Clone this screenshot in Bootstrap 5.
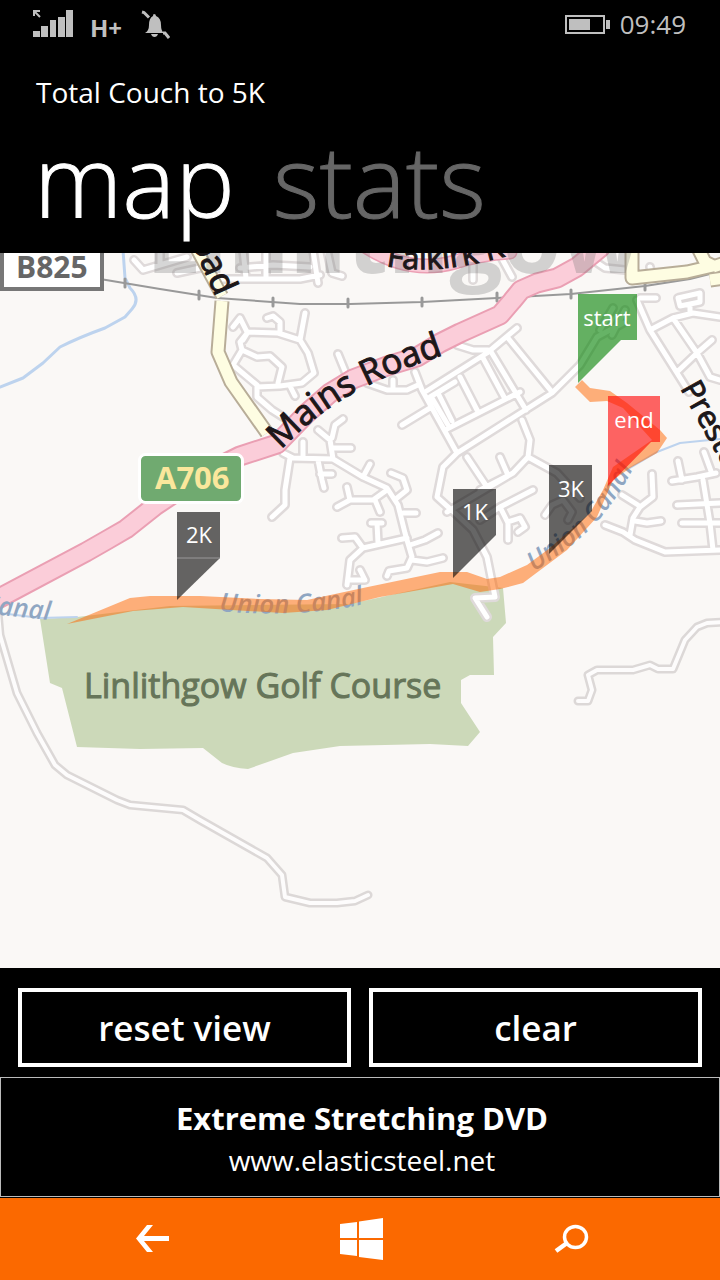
<!DOCTYPE html>
<html lang="en">
<head>
<meta charset="utf-8">
<meta name="viewport" content="width=device-width, initial-scale=1">
<title>Total Couch to 5K</title>
<link href="https://cdn.jsdelivr.net/npm/bootstrap@5.3.0/dist/css/bootstrap.min.css" rel="stylesheet">
<style>
  body { background: #000; color: #fff; font-family: "Open Sans", "Noto Sans", sans-serif; }
  .status { color: #bfbfbf; height: 48px; padding: 0 34px 0 32px; }
  .clock { font-size: 26px; line-height: 48px; }
  .net { font-size: 24px; font-weight: 700; line-height: 24px; }
  .app-title { font-size: 28px; line-height: 40px; padding: 24px 36px 0; }
  .pivot { padding: 0 34px; height: 141px; gap: 38px; }
  .pivot a { font-size: 100px; line-height: 134px; font-weight: 300; color: #666; text-decoration: none; -webkit-text-stroke: 1px; }
  .pivot a.active { color: #fff; }
  .map { background: #faf8f6; }
  .actions { padding: 20px 18px 10px; gap: 18px; }
  .btn-metro { height: 79px; border: 4px solid #fff; border-radius: 0; color: #fff; font-size: 35px; font-weight: 600; line-height: 40px; padding: 0; }
  .btn-metro:hover { background: #fff; color: #000; }
  .promo { border: 1px solid #bbb; height: 120px; margin-bottom: 1px; color: #fff; text-decoration: none; padding: 19px 0 0 4px; }
  .promo strong { font-size: 31px; line-height: 42px; }
  .promo span { font-size: 28px; line-height: 42px; }
  .keys { background: #fb6900; height: 82px; padding: 0 45px 0 51px; }
  .keys button { background: none; border: 0; padding: 0; line-height: 0; }
  .casing { stroke: #dfdada; stroke-width: 10; }
  .street { stroke: #fff; stroke-width: 5; }
  .casing-sm { stroke: #dcd8d7; stroke-width: 9; }
  .street-sm { stroke: #fdfcfc; stroke-width: 4; }
  .ways { fill: none; stroke-linecap: round; stroke-linejoin: round; }
  .pin { font-size: 22px; fill: #fff; text-anchor: middle; }
  .road-name { font-size: 35px; fill: #1c1719; stroke: #1c1719; }
  .road-name-sm { font-size: 31px; }
  .water-name { font-size: 26px; font-style: italic; font-weight: 600; fill: #8fa6c2; }
</style>
</head>
<body class="d-flex flex-column min-vh-100">

<header>
  <div class="status d-flex align-items-center">
    <svg width="42" height="30" viewBox="32 8 42 30" fill="#bfbfbf" aria-label="Signal">
      <path d="M33 30h7v6h-7zM41 25h7v11h-7zM50 19h6v17h-6zM58 16h7v20h-7zM66 9h7v27h-7z"/>
      <path d="M34 15v-5h6M34 10l6 6" fill="none" stroke="#bfbfbf" stroke-width="2"/>
    </svg>
    <span class="net ms-3 mt-2">H+</span>
    <svg class="ms-3" width="32" height="32" viewBox="138 8 32 32" fill="#bfbfbf" aria-label="Silent">
      <path d="M154 14q2 0 2 2 5 2 5 9 0 6 3 8h-19q4-2 4-8 0-7 4-9 0-2 1-2zM151 34h7q-1 3-3.500 3t-3.500-3z"/>
      <path d="M142 12l2 .5 5 5M163 33l2 0 4 5" fill="none" stroke="#bfbfbf" stroke-width="3"/>
    </svg>
    <svg class="ms-auto me-2" width="48" height="22" viewBox="564 13 48 22" fill="#bfbfbf" aria-label="Battery">
      <path d="M566 16h38v17h-38z" fill="none" stroke="#bfbfbf" stroke-width="2"/><path d="M569 19h21v11h-21zM606 20h4v9h-4z"/>
    </svg>
    <span class="clock">09:49</span>
  </div>
  <div class="app-title">Total Couch to 5K</div>
  <nav class="pivot d-flex"><a href="#map" class="active">map</a><a href="#stats">stats</a></nav>
</header>

<main class="map" id="map">
<svg class="d-block w-100" viewBox="0 253 720 715" aria-label="Route map">
  <defs>
    <path id="streets" d="M243 340L248 332 278 333 300 340 308 353 314 373 302 383 280 386 257 387M300 340L305 313M280 332V322L273 316 267 318M233 327L240 318 247 332M248 332L240 342 242 350 233 365 257 385V397L272 410 283 417M242 350L257 357 270 356 282 367 278 383M290 386L295 396M338 354L347 376M283 453L293 458 333 459 363 477 387 488 398 505 405 533 412 557 407 568 389 571 387 576M290 458L285 490V505L272 517M303 457V442M318 430L330 440 333 459M333 448H351M332 438L335 425 343 419M318 460L322 480 324 488M320 474H332M363 477L370 464M391 473L403 478 407 490 397 498M337 507L350 500H373L387 490M347 487L350 500M375 500L380 512M403 513H416M407 538L363 548 350 560 347 585M350 580H365L360 570M363 548L355 537 342 538M378 543L377 523M371 523H382M410 545L425 540 438 533M412 560L427 562 443 558M415 372L422 390 457 453M367 383L387 390 407 390 418 385M393 380V390M425 392L487 353 517 328M457 345L473 350 488 350M402 425L430 408M432 398L448 425M438 393L452 421M460 377L477 410M483 358L504 397M445 430L520 392M430 397L455 382M457 453L473 443 552 393 580 365 597 337 623 323M508 338L552 392M490 350L526 410M457 453L443 467 437 497 457 515 473 530 487 557 495 597 475 598 487 617M467 457L487 487M522 420L530 440 528 457 513 473 480 490M528 457L557 473 580 498M500 457L507 473M447 512L513 473M480 520L500 507 533 490M500 507L508 523V540M508 522L520 518 525 527 518 532M545 515L552 505 563 500 572 512 568 520M637 300L650 330 677 373 689 392M650 330L673 318 693 313 720 317M673 318L697 353 710 377 720 380M677 372L697 353 712 340M640 298H656M678 298L700 293V302L690 304 680 306ZM690 304V312M650 267L652 276M672 481L697 477 716 473M678 461L682 480M704 452L712 474M677 505L720 503M682 523H720M703 480L710 523 713 550M605 525L623 532 635 540 665 552 720 550M630 535L633 518 640 507 653 497 652 474M622 495L638 505M635 521L647 523 661 521M134 260L143 270 187 257M160 265V250M177 273L200 268M213 279L300 279 320 275M240 268L273 265 310 267M266 250V278M243 250L246 278M313 250L318 283M327 250L332 273 342 276M473 255V280M500 255L512 277M590 258L605 268 625 270M600 330L613 308M612 335L625 310"/>
    <path id="tracks" d="M-4 590L0 635 17 693 37 733 55 765 67 775 117 800 130 805 183 810 200 820 267 858 282 875 285 897 310 903H337L355 901 368 895M578 701H588L592 690 588 675 597 670H633L650 665 658 669H673L685 640 697 627 707 623 724 622"/>
    <path id="a706" d="M-8 602L86 552 107 540 126 529 155 506 200 476 240 456 277 444 307 413 330 393 353 379 387 366 417 357 440 343 460 333 500 315 512 301 521 290 537 283 557 278 577 267 600 248"/>
    <path id="b-north" d="M196 248L222 296"/>
    <path id="b-roads" d="M222 301L218 352 231 382 267 433M632 248V278L687 272 713 266 705 262 698 248M728 262L713 267M724 278L710 280"/>
    <path id="mains" d="M281 450C317 412 355 384 452 352"/>
    <path id="falkirk" d="M386 266Q440 277 520 252"/>
    <path id="canal-mid" d="M219 611Q300 619 374 602"/>
    <path id="canal-east" d="M534 572C588 535 609 519 643 449"/>
  </defs>

  <!-- golf course and water -->
  <path fill="#ccd9b9" d="M40 619L77 617 170 606 350 604 450 582 503 588 506 623 493 637 494 675H470L461 680V703L480 732 468 746 430 744 340 746 293 753 248 769Q232 768 222 763L203 748 140 749 77 747 62 688 50 683Z"/>
  <g class="ways" stroke="#bdd3ee" stroke-width="3">
    <path d="M123 250L125 278 130 288Q141 299 132 309L125 317 105 328Q80 337 60 347L43 363 23 378 0 387"/>
    <path d="M0 613L40 618 77 617M630 468L657 452 680 443 720 439" stroke-width="2"/>
  </g>

  <!-- roads -->
  <g class="ways">
    <use href="#streets" class="casing"/><use href="#streets" class="street"/>
    <use href="#tracks" class="casing-sm"/><use href="#tracks" class="street-sm"/>
    <path d="M100 279L160 289 217 298 300 304 350 304 422 302 497 298 571 294 645 286 690 279 722 271" stroke="#999" stroke-width="2"/>
    <path d="M125 279v8M199 291v8M273 298v8M348 299v8M422 298v8M497 293v8M571 290v8M645 282v8M716 268v8" stroke="#999" stroke-width="3"/>
    <path d="M365 246Q410 275 455 262Q480 254 510 252" stroke="#ec9fb4" stroke-width="15"/>
    <path d="M365 246Q410 275 455 262Q480 254 510 252" stroke="#f9ccd8" stroke-width="12"/>
    <g stroke-linecap="butt"><use href="#b-north" stroke="#b8ad98" stroke-width="14"/><use href="#b-north" stroke="#fefde2" stroke-width="10"/>
    <use href="#b-roads" stroke="#b8ad98" stroke-width="15"/><use href="#b-roads" stroke="#fefde2" stroke-width="11"/></g>
    <use href="#a706" stroke="#ea9fb3" stroke-width="21"/><use href="#a706" stroke="#fbcdd9" stroke-width="17"/>
  </g>

  <!-- map labels -->
  <text x="146" y="273" font-size="94" font-weight="700" fill="#777" fill-opacity=".3">Linlithgow</text>
  <text class="road-name"><textPath href="#mains">Mains Road</textPath></text>
  <text class="road-name road-name-sm"><textPath href="#falkirk">Falkirk R</textPath></text>
  <text class="road-name" transform="translate(182 221) rotate(66)">Road</text>
  <text class="road-name road-name-sm" transform="translate(680 388) rotate(61)">Preston Road</text>
  <text class="water-name" transform="translate(-18 613) rotate(6)">Canal</text>
  <text class="water-name"><textPath href="#canal-mid">Union Canal</textPath></text>
  <text class="water-name"><textPath href="#canal-east">Union Canal</textPath></text>
  <text x="84" y="698" font-size="34" fill="#667559" stroke="#667559">Linlithgow Golf Course</text>
  <path d="M2 240H102V289H2Z" fill="#fff" stroke="#777" stroke-width="4"/>
  <text x="16" y="278" font-size="30" font-weight="700" fill="#666">B825</text>
  <rect x="139.500" y="454.500" width="103" height="48" rx="6" fill="#70aa70" stroke="#fff" stroke-width="3"/>
  <text x="155" y="489" font-size="31" font-weight="700" fill="#fae79c">A706</text>

  <!-- recorded route -->
  <path fill="#f60" fill-opacity=".51" d="M67 624L130 598 150 596H200L260 599 307 600 363 588 440 572H467L487 579 500 577 527 565 550 548 590 513 603 490 613 467 652 440 623 408 607 401 590 402 575 387 582 380 590 388 610 391 627 403 660 430 667 438 657 453 630 468 613 480 597 517 567 550 523 583 500 589 480 592 453 584 380 597 327 610 283 613 183 607 133 611Z"/>
  <g class="pin">
    <path d="M578 294h59v46h-16l-43 43z" fill="#008000" fill-opacity=".6"/><text x="607" y="326">start</text>
    <path d="M608 396h52v46h-9l-43 44z" fill="#f00" fill-opacity=".6"/><text x="634" y="428">end</text>
    <path d="M177 512h43v46l-43 42z" fill-opacity=".6" fill="#000"/><path d="M177 558h43" stroke="#999"/><text x="199" y="543">2K</text>
    <path d="M453 489h43v46l-43 43z" fill-opacity=".6" fill="#000"/><text x="475" y="520">1K</text>
    <path d="M549 465h43v46l-43 43z" fill-opacity=".6" fill="#000"/><text x="571" y="497">3K</text>
  </g>
</svg>
</main>

<div class="actions d-flex">
  <button type="button" class="btn btn-metro flex-fill w-50">reset view</button>
  <button type="button" class="btn btn-metro flex-fill w-50">clear</button>
</div>

<a class="promo d-flex flex-column text-center" href="#promo"><strong>Extreme Stretching DVD</strong><span>www.elasticsteel.net</span></a>

<footer class="keys mt-auto d-flex justify-content-around align-items-center">
  <button type="button" aria-label="Back"><svg width="34" height="30" viewBox="136 1223 34 30"><path d="M153 1224h-6l-11 13.500 11 13.500h6l-9-11h25v-5h-25z" fill="#fff"/></svg></button>
  <button type="button" aria-label="Start"><svg width="44" height="42" viewBox="340 1218 44 42"><path d="M340 1224l17-2v16h-17zM359 1221.500l24-3.500v20h-24zM340 1240h17v16l-17-2zM359 1240h24v20l-24-3z" fill="#fff"/></svg></button>
  <button type="button" aria-label="Search"><svg width="36" height="32" viewBox="553 1224 36 32" fill="none" stroke="#fff"><ellipse cx="574.500" cy="1238" rx="11" ry="10.500" stroke-width="3.500"/><path d="M566 1244l-11 8" stroke-width="4.500"/></svg></button>
</footer>

<script src="https://cdn.jsdelivr.net/npm/bootstrap@5.3.0/dist/js/bootstrap.bundle.min.js"></script>
</body>
</html>
